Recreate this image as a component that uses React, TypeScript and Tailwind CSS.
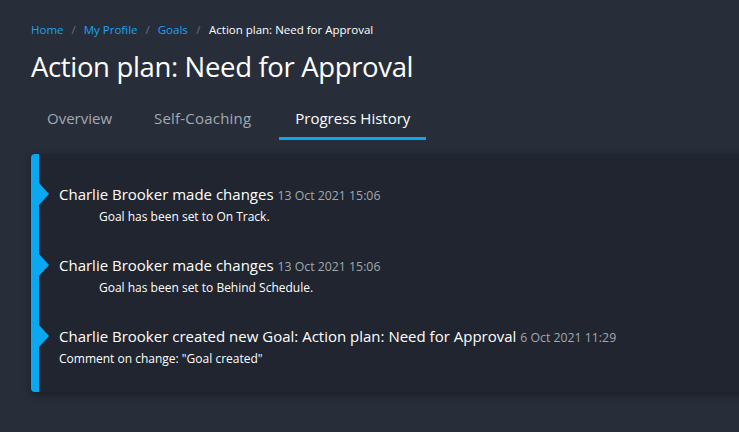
import React from "react";

const entries = [
  {
    who: "Charlie Brooker made changes",
    date: "13 Oct 2021 15:06",
    body: "Goal has been set to On Track.",
    indent: true,
  },
  {
    who: "Charlie Brooker made changes",
    date: "13 Oct 2021 15:06",
    body: "Goal has been set to Behind Schedule.",
    indent: true,
  },
  {
    who: "Charlie Brooker created new Goal: Action plan: Need for Approval",
    date: "6 Oct 2021 11:29",
    body: 'Comment on change: "Goal created"',
    indent: false,
  },
];

export default function App() {
  return (
    <div
      className="min-h-screen w-full overflow-hidden bg-[#272e39] text-white"
      style={{ fontFamily: '"Open Sans", "Noto Sans", sans-serif' }}
    >
      <div className="pl-[31px] pt-[21px]">
        <nav className="flex items-center text-[11.5px] leading-[18px]">
          <span className="text-[#1ea2ec]">Home</span>
          <span className="mx-[8px] text-[#6b7280]">/</span>
          <span className="text-[#1ea2ec]">My Profile</span>
          <span className="mx-[8px] text-[#6b7280]">/</span>
          <span className="text-[#1ea2ec]">Goals</span>
          <span className="mx-[8.5px] text-[#6b7280]">/</span>
          <span className="text-white">Action plan: Need for Approval</span>
        </nav>
        <h1 className="mt-[10px] text-[27.5px] leading-[36px] font-normal tracking-[-0.35px]">
          Action plan: Need for Approval
        </h1>
        <div className="mt-[20px] flex gap-[10px] text-[15px] leading-[20px]">
          <div className="px-[16px] pb-[9px] pt-[3px] text-[#a3a8b0] border-b-[3px] border-transparent">Overview</div>
          <div className="pl-[16px] pr-[18px] pb-[9px] pt-[3px] text-[#a3a8b0] border-b-[3px] border-transparent tracking-[0.2px]">Self-Coaching</div>
          <div className="px-[16px] pb-[9px] pt-[3px] text-white border-b-[3px] border-[#0ea5e9]">Progress History</div>
        </div>
        <div className="mt-[14px] flex w-[800px] rounded-l-[4px] bg-[#20252f] shadow-[0_3px_8px_rgba(0,0,0,0.35)]">
          <div className="w-[8px] shrink-0 rounded-l-[4px] bg-[#0aa8f0]" />
          <div className="flex flex-col gap-[28px] pb-[24px] pt-[29px]">
            {entries.map((e, i) => (
              <div key={i} className="relative pl-[20px]">
                <div className="absolute left-0 top-[0px] h-0 w-0 border-y-[11px] border-l-[10px] border-y-transparent border-l-[#0aa8f0]" />
                <div className="text-[15px] leading-[22px] whitespace-nowrap">
                  <span>{e.who}</span>{" "}
                  <span className="text-[12.3px] text-[#a3a8b0]">{e.date}</span>
                </div>
                <div className={`mt-[1px] text-[12px] leading-[18px] ${e.indent ? "pl-[40px]" : ""}`}>
                  {e.body}
                </div>
              </div>
            ))}
          </div>
        </div>
      </div>
    </div>
  );
}
